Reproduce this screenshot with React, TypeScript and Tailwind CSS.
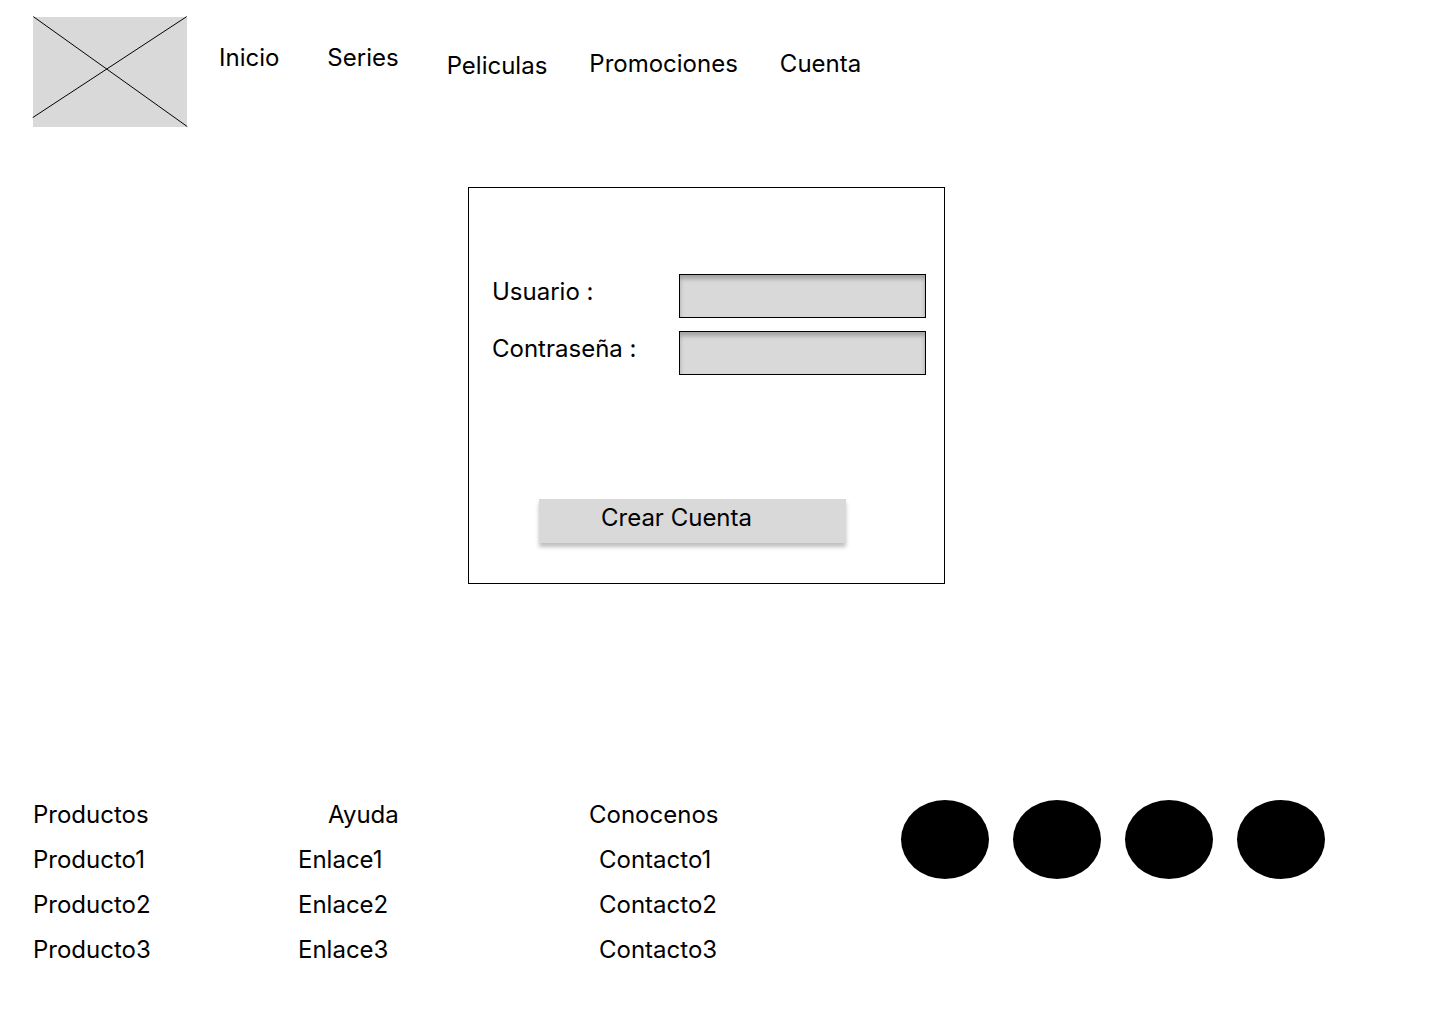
const navItems = [
  { label: 'Inicio', place: 'pt-10' },
  { label: 'Series', place: 'ml-12 pt-10' },
  { label: 'Peliculas', place: 'ml-12 pt-12' },
  { label: 'Promociones', place: 'ml-[42px] pt-[46px]' },
  { label: 'Cuenta', place: 'ml-[42px] pt-[46px]' },
];

const columns = [
  { title: 'Productos', links: ['Producto1', 'Producto2', 'Producto3'], width: 'w-[265px]', titlePad: '', linkPad: '' },
  { title: 'Ayuda', links: ['Enlace1', 'Enlace2', 'Enlace3'], width: 'w-[291px]', titlePad: 'pl-[30px]', linkPad: '' },
  { title: 'Conocenos', links: ['Contacto1', 'Contacto2', 'Contacto3'], width: 'w-[312px]', titlePad: '', linkPad: 'pl-[10px]' },
];

const socials = ['Red social 1', 'Red social 2', 'Red social 3', 'Red social 4'];

function Logo() {
  return (
    <svg className="mr-8 shrink-0" width="154" height="110" viewBox="0 0 154 110" overflow="visible" role="img" aria-label="Logo">
      <rect width="154" height="110" fill="#d9d9d9" />
      <path d="M0.3 -0.4L154.3 109.6M-0.3 100.6L153.7 -0.4" stroke="#000" fill="none" />
    </svg>
  );
}

function Field({ id, label, type }: { id: string; label: string; type: string }) {
  return (
    <div className="flex items-start justify-between">
      <label htmlFor={id} className="pt-[3px]">{label}</label>
      <input
        id={id}
        type={type}
        className="h-11 w-[247px] border border-black bg-[#d9d9d9] px-2 shadow-[inset_0_4px_4px_rgba(0,0,0,0.25)]"
      />
    </div>
  );
}

export default function App() {
  return (
    <div className="flex min-h-screen flex-col bg-white font-['Inter',sans-serif] text-2xl leading-[29px] text-black">
      <header className="flex items-start pt-[17px] pl-[33px]">
        <Logo />
        <nav className="-mt-[14px] flex items-start">
          {navItems.map((item) => (
            <a key={item.label} href="#" className={item.place}>{item.label}</a>
          ))}
        </nav>
      </header>

      <main className="flex justify-center pt-[60px] pr-[27px]">
        <form className="w-[477px] border border-black pt-[86px] pr-[18px] pb-10 pl-[23px]">
          <div className="flex flex-col gap-[13px]">
            <Field id="usuario" label="Usuario :" type="text" />
            <Field id="contrasena" label="Contraseña :" type="password" />
          </div>
          <button
            type="button"
            className="mt-[124px] ml-[47px] flex h-11 w-[307px] items-start bg-[#d9d9d9] pt-1 pl-[62px] shadow-[0_4px_4px_rgba(0,0,0,0.25)]"
          >
            Crear Cuenta
          </button>
        </form>
      </main>

      <footer className="mt-auto flex items-start pb-[60px] pl-[33px]">
        {columns.map((column) => (
          <section key={column.title} className={column.width}>
            <h2 className={column.titlePad}>{column.title}</h2>
            <ul className={column.linkPad}>
              {column.links.map((link) => (
                <li key={link} className="mt-4"><a href="#">{link}</a></li>
              ))}
            </ul>
          </section>
        ))}
        <div className="flex gap-6">
          {socials.map((name) => (
            <a key={name} href="#" aria-label={name} className="h-[79px] w-[88px] rounded-[50%] bg-black" />
          ))}
        </div>
      </footer>
    </div>
  );
}
